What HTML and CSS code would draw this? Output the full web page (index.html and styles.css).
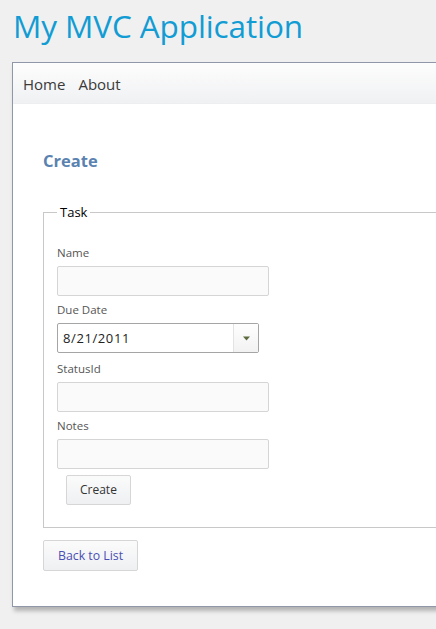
FILE: index.html
```html
<!DOCTYPE html>
<html>
<head>
<meta charset="utf-8">
<link rel="stylesheet" href="styles.css">
</head>
<body>
<header class="site-header">
  <h1 class="site-title">My MVC Application</h1>
</header>
<div class="page">
  <nav class="menu">
    <a class="menu-link" href="#">Home</a>
    <a class="menu-link" href="#">About</a>
  </nav>
  <main class="content">
    <h2 class="page-title">Create</h2>
    <form class="form">
      <fieldset class="fieldset">
        <legend class="legend">Task</legend>
        <div class="field">
          <label class="label">Name</label>
          <div class="input"></div>
        </div>
        <div class="field">
          <label class="label">Due Date</label>
          <div class="select">
            <span class="select-value">8/21/2011</span>
            <span class="select-btn"><svg width="9" height="5" viewBox="0 0 9 5"><path d="M1 0.5h7L4.5 4.5z" fill="#5d6b3f"/></svg></span>
          </div>
        </div>
        <div class="field">
          <label class="label">StatusId</label>
          <div class="input"></div>
        </div>
        <div class="field">
          <label class="label">Notes</label>
          <div class="input"></div>
        </div>
        <div class="actions">
          <span class="button">Create</span>
        </div>
      </fieldset>
    </form>
    <div class="back">
      <a class="button link-button" href="#">Back to List</a>
    </div>
  </main>
</div>
</body>
</html>
```
FILE: styles.css
```css
html, body {
  margin: 0;
  padding: 0;
  background: #f0f0f0;
  overflow: hidden;
  width: 436px;
  height: 629px;
}
body {
  font-family: "Open Sans", "Noto Sans", sans-serif;
  color: #333;
}
.site-header {
  padding: 4px 0 0 13px;
  height: 58px;
  box-sizing: border-box;
}
.site-title {
  margin: 0;
  font-weight: 400;
  font-size: 31.5px;
  line-height: 44px;
  color: #129cd4;
  letter-spacing: -0.1px;
}
.page {
  margin-left: 12px;
  margin-top: 4px;
  width: 520px;
  background: #fff;
  border: 1px solid #8f97a9;
  border-right: none;
  box-shadow: 2px 4px 4px rgba(0,0,0,0.25);
}
.menu {
  display: flex;
  gap: 13px;
  height: 41px;
  align-items: center;
  padding-left: 10px;
  background: linear-gradient(#fdfdfd, #f0f1f3);
  border-bottom: 1px solid #eceef1;
  box-sizing: border-box;
}
.menu-link {
  color: #3a3a3a;
  text-decoration: none;
  font-size: 15px;
  padding-top: 2px;
}
.content {
  padding: 44px 0 35px 30px;
}
.page-title {
  margin: 0;
  font-size: 16.5px;
  font-weight: 700;
  color: #5a82b0;
  line-height: 26px;
}
.form {
  margin-top: 29px;
}
.fieldset {
  margin: 0;
  border: 1px solid #c8c8c8;
  border-right: none;
  padding: 24px 0 22px 13px;
}
.legend {
  font-size: 13px;
  color: #000;
  padding: 0 3px;
  margin-left: 0;
}
.field {
  display: flex;
  flex-direction: column;
}
.label {
  font-size: 11.5px;
  color: #555;
  line-height: 16px;
  height: 17px;
}
.field + .field .label { margin-top: 6px; }
.input {
  margin-top: 4px;
  width: 210px;
  height: 28px;
  border: 1px solid #d5d5d5;
  background: #fafafa;
  border-radius: 2px;
}
.select {
  margin-top: 4px;
  margin-bottom: 2px;
  width: 200px;
  height: 28px;
  border: 1px solid #a5a5a5;
  border-radius: 2px;
  display: flex;
  background: #fff;
}
.select-value {
  flex: 1;
  font-size: 13px;
  color: #222;
  line-height: 28px;
  padding-left: 5px;
  letter-spacing: 0.6px;
}
.select-btn {
  width: 24px;
  border-left: 1px solid #e3e3e3;
  background: linear-gradient(#fefefe, #f2f2f2);
  display: flex;
  align-items: center;
  justify-content: center;
}
.actions {
  margin-top: 6px;
  padding-left: 9px;
}
.button {
  display: inline-block;
  height: 28px;
  line-height: 28px;
  padding: 0 13px;
  border: 1px solid #d6d6d6;
  border-radius: 2px;
  background: linear-gradient(#fbfbfb, #eef0f2);
  font-size: 12px;
  color: #333;
  text-decoration: none;
}
.back {
  margin-top: 12px;
}
.link-button {
  color: #4a4fb3;
  padding: 0 14px;
  height: 29px;
  line-height: 29px;
  font-size: 12.3px;
}
```
